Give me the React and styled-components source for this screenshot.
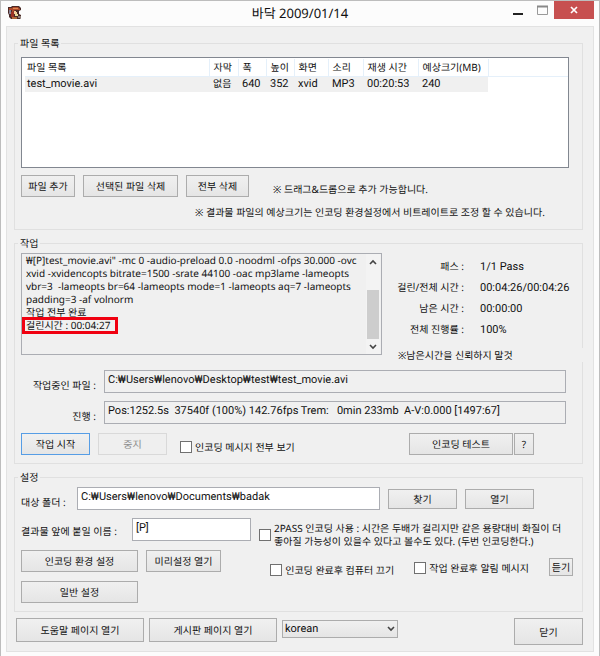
import React, { useState } from 'react';
import styled, { createGlobalStyle } from 'styled-components';

const valueFont = "11px/14px Roboto, 'Noto Sans', 'Noto Sans CJK KR', sans-serif";

const GlobalStyle = createGlobalStyle`
  * {
    box-sizing: border-box;
  }

  body {
    margin: 0;
    background: #fcfcfc;
    color: #111;
    font: 10px/14px 'Noto Sans', 'Noto Sans CJK KR', sans-serif;
    text-rendering: geometricPrecision;
  }

  button, input, select, textarea {
    margin: 0;
    color: inherit;
    font: inherit;
    text-rendering: inherit;
  }
`;

const Window = styled.div`
  min-height: 100vh;
  display: flex;
  flex-direction: column;
  padding: 0 5px 5px;
  border: 1px solid #bdbdbd;
  background: #fcfcfc;
`;

const TitleBar = styled.header`
  display: grid;
  grid-template-columns: 1fr auto 1fr;
  height: 25px;
`;

const AppIcon = styled.svg`
  width: 14px;
  height: 14px;
  margin: 5px 0 0 2px;
`;

const Title = styled.h1`
  margin: 0;
  font-size: 13px;
  font-weight: 400;
  line-height: 24px;
`;

const WindowButtons = styled.div`
  display: flex;
  justify-content: flex-end;
`;

const WindowButton = styled.button`
  width: ${(p) => (p.$close ? 40 : 24)}px;
  height: 18px;
  padding: 0;
  border: 0;
  background: ${(p) => (p.$close ? '#c75050' : 'transparent')};

  svg {
    display: block;
    margin: 0 auto;
  }
`;

const Client = styled.main`
  flex: 1;
  padding: 9px 10px 6px 7px;
  border: 1px solid #e2e2e2;
  background: #f0f0f0;
`;

const Group = styled.fieldset`
  min-width: 0;
  margin: 0 0 6px;
  padding: 0 9px 8px 6px;
  border: 1px solid #e0e0e0;
`;

const Legend = styled.legend`
  margin-left: -3px;
  padding: 0 2px;
`;

const Row = styled.div`
  display: flex;
  align-items: ${(p) => p.$align || 'center'};
  gap: 8px;
  margin-top: ${(p) => p.$top || 0}px;
  padding-right: ${(p) => p.$right || 0}px;
`;

const Button = styled.button`
  width: ${(p) => p.$width}px;
  height: ${(p) => p.$height || 22}px;
  flex: none;
  padding: 0;
  border: 1px solid ${(p) => (p.$primary ? '#569de5' : '#acacac')};
  background: linear-gradient(#f0f0f0, #e5e5e5);

  &:disabled {
    border-color: #d9d9d9;
    background: #efefef;
    color: #8c8c8c;
  }
`;

const ButtonPair = styled.div`
  display: flex;
  gap: 1px;
`;

const Field = styled.input`
  width: ${(p) => (p.$width ? `${p.$width}px` : 'auto')};
  height: 23px;
  min-width: 0;
  flex: ${(p) => (p.$width ? 'none' : 1)};
  padding: 0 3px 4px;
  border: 1px solid #abadb3;
  background: #fff;
  font: ${valueFont};

  &:read-only {
    background: #f0f0f0;
  }
`;

const FieldLabel = styled.label`
  width: ${(p) => p.$width}px;
  flex: none;
  padding-top: 6px;
  text-align: ${(p) => p.$textAlign || 'left'};
`;

const FileList = styled.div`
  height: 111px;
  margin: 7px 4px 0 0;
  padding: 1px 0 0 3px;
  border: 1px solid #828790;
  background: #fff;
`;

const FileTable = styled.table`
  width: 100%;
  border-collapse: collapse;
  table-layout: fixed;

  th, td {
    height: 16px;
    padding: 0 0 0 4px;
    text-align: left;
    font-weight: 400;
    line-height: 14px;
    white-space: nowrap;
  }

  th {
    height: 17px;
    border-right: 1px solid #e5f0fa;
    border-bottom: 1px solid #e5f0fa;
  }

  th:first-child, td:first-child {
    padding-left: 2px;
  }

  th:last-child {
    border-right: 0;
  }

  td {
    background: #f0f0f0;
    font: ${valueFont};
  }

  td:last-child {
    background: #fff;
  }
`;

const Small = styled.span`
  font-size: 10px;
`;

const Note = styled.p`
  margin: ${(p) => p.$margin || 0};
  background: #f0f0f0;
`;

const LogFrame = styled.div`
  position: relative;
  display: flex;
  width: 361px;
  height: 102px;
  flex: none;
  padding: 0 1px;
  border: 1px solid #abadb3;
`;

const LogText = styled.textarea`
  min-width: 0;
  flex: 1;
  padding: 0 0 0 3px;
  border: 0;
  outline: 0;
  resize: none;
  overflow: hidden;
  background: transparent;
  line-height: 13px;
  white-space: pre;
`;

const ScrollBar = styled.div`
  display: flex;
  flex-direction: column;
  justify-content: space-between;
  width: 14px;
  background: #f3f3f3;
`;

const ScrollButton = styled.button`
  height: 15px;
  padding: 0;
  border: 0;
  background: transparent;

  svg {
    display: block;
    margin: 0 auto;
  }
`;

const ScrollThumb = styled.div`
  height: 49px;
  margin: auto 1px 0;
  background: #cdcdcd;
`;

const Highlight = styled.div`
  position: absolute;
  left: 0;
  top: 63px;
  width: 96px;
  height: 17px;
  border: 3px solid #f00010;
`;

const Status = styled.dl`
  display: grid;
  grid-template-columns: 74px 1fr;
  column-gap: 16px;
  margin: 3px 0 0;
  line-height: 21px;

  dt {
    text-align: right;
    white-space: nowrap;
  }

  dd {
    margin: 0;
    font: ${valueFont};
    line-height: 21px;
  }
`;

const StatusColumn = styled.div`
  flex: 1;
  min-width: 0;
`;

const CheckLabel = styled.label`
  display: flex;
  align-items: center;
  gap: 3px;
  margin-top: ${(p) => p.$top || 0}px;
  margin-left: ${(p) => p.$left || 0}px;
  white-space: nowrap;

  input {
    width: 12px;
    height: 12px;
    flex: none;
    appearance: none;
    border: 1px solid #707070;
    background: #fff;
  }

  input:checked {
    box-shadow: inset 0 0 0 2px #fff;
    background: #333;
  }
`;

const TwoLines = styled.span`
  line-height: 13px;
`;

const Spacer = styled.div`
  flex: 1;
`;

const Options = styled.div`
  display: flex;
  align-items: flex-start;
  justify-content: space-between;
  margin-top: 2px;
`;

const OptionButtons = styled.div`
  display: grid;
  grid-template-columns: auto auto;
  gap: 9px 8px;
`;

const OptionChecks = styled.div`
  display: flex;
  gap: 20px;
  padding-top: 8px;
`;

const Footer = styled.footer`
  display: flex;
  align-items: flex-start;
  gap: 5px;
  padding-left: 2px;
`;

const SelectBox = styled.div`
  position: relative;
  width: 116px;
  margin-top: 2px;

  svg {
    position: absolute;
    right: 3px;
    top: 6px;
    pointer-events: none;
  }
`;

const Select = styled.select`
  display: block;
  width: 100%;
  height: 18px;
  padding: 0 2px;
  appearance: none;
  border: 1px solid #acacac;
  border-radius: 0;
  background: linear-gradient(#f0f0f0, #e5e5e5);
  font: ${valueFont};
`;

const columns = [
  ['파일 목록', 184],
  ['자막', 29],
  ['폭', 28],
  ['높이', 28],
  ['화면', 34],
  ['소리', 35],
  ['재생 시간', 55],
];

const log = [
  '₩[P]test_movie.avi" -mc 0 -audio-preload 0.0 -noodml -ofps 30.000 -ovc',
  'xvid -xvidencopts bitrate=1500 -srate 44100 -oac mp3lame -lameopts',
  'vbr=3  -lameopts br=64 -lameopts mode=1 -lameopts aq=7 -lameopts',
  'padding=3 -af volnorm',
  '작업 전부 완료',
  '걸린시간 : 00:04:27',
].join('\n');

const Chevron = ({ up }) => (
  <svg width="8" height="6" viewBox="0 0 8 6" aria-hidden="true">
    <path d={up ? 'M1 5 4 2 7 5' : 'M1 1 4 4 7 1'} fill="none" stroke="#444" strokeWidth="1.6" />
  </svg>
);

const Check = ({ label, top, left }) => {
  const [checked, setChecked] = useState(false);
  return (
    <CheckLabel $top={top} $left={left}>
      <input type="checkbox" checked={checked} onChange={(e) => setChecked(e.target.checked)} />
      {label}
    </CheckLabel>
  );
};

const App = () => {
  const [folder, setFolder] = useState('C:₩Users₩lenovo₩Documents₩badak');
  const [prefix, setPrefix] = useState('[P]');
  const [language, setLanguage] = useState('korean');

  return (
    <Window>
      <GlobalStyle />
      <TitleBar>
        <AppIcon viewBox="0 0 14 14" aria-hidden="true">
          <path d="M0 1h3l1-1h7l2 2v2l-2 1v3l2 1v3l-1 1H3l-2-2V9L0 7z" fill="#4a2a26" />
          <path d="M1 2h3l1-1h5l2 2v1H7L5 6H4V4H1z" fill="#b04a2c" />
          <path d="M5 2h5v1H5z" fill="#e08a50" />
          <path d="M1 4h2v4H1z" fill="#8a8496" />
          <path d="M3 6h3v5H3z" fill="#9c3222" />
          <path d="M6 5h3v3H6z" fill="#f2cf9a" />
          <path d="M8 5h1v1H8z" fill="#3a2420" />
          <path d="M7 8h3v2H7z" fill="#e6dc9c" />
          <path d="M10 10h3v2h-3z" fill="#8f8078" />
          <path d="M4 11h5v2H4z" fill="#b06a38" />
        </AppIcon>
        <Title>바닥 2009/01/14</Title>
        <WindowButtons>
          <WindowButton aria-label="최소화">
            <svg width="10" height="14" viewBox="0 0 10 14">
              <path d="M0 11h10" stroke="#222" strokeWidth="2" />
            </svg>
          </WindowButton>
          <WindowButton aria-label="최대화">
            <svg width="11" height="10" viewBox="0 0 11 10">
              <path d="M.5 1.5h10v8H.5z" fill="none" stroke="#999" />
              <path d="M0 1.5h11" stroke="#888" strokeWidth="2" />
            </svg>
          </WindowButton>
          <WindowButton $close aria-label="창 닫기">
            <svg width="8" height="8" viewBox="0 0 8 8">
              <path d="M1 1l6 6M7 1 1 7" stroke="#fff" strokeWidth="1.7" />
            </svg>
          </WindowButton>
        </WindowButtons>
      </TitleBar>

      <Client>
        <Group>
          <Legend>파일 목록</Legend>
          <FileList>
            <FileTable>
              <colgroup>
                {columns.map(([name, width]) => (
                  <col key={name} width={width} />
                ))}
                <col width="70" />
                <col />
              </colgroup>
              <thead>
                <tr>
                  {columns.map(([name]) => (
                    <th key={name}>{name}</th>
                  ))}
                  <th>예상크기(MB)</th>
                  <th />
                </tr>
              </thead>
              <tbody>
                <tr>
                  <td>test_movie.avi</td>
                  <td><Small>없음</Small></td>
                  <td>640</td>
                  <td>352</td>
                  <td>xvid</td>
                  <td>MP3</td>
                  <td>00:20:53</td>
                  <td>240</td>
                  <td />
                </tr>
              </tbody>
            </FileTable>
          </FileList>
          <Row $top={7}>
            <Button $width={54}>파일 추가</Button>
            <Button $width={95}>선택된 파일 삭제</Button>
            <Button $width={63}>전부 삭제</Button>
            <Note $margin="5px 0 0 16px">※ 드래그&amp;드롭으로 추가 가능합니다.</Note>
          </Row>
          <Note $margin="8px 0 2px 174px">
            ※ 결과물 파일의 예상크기는 인코딩 환경설정에서 비트레이트로 조정 할 수 있습니다.
          </Note>
        </Group>

        <Group>
          <Legend>작업</Legend>
          <Row $align="flex-start" $top={3}>
            <LogFrame>
              <LogText aria-label="작업" readOnly value={log} />
              <ScrollBar>
                <ScrollButton aria-label="위로"><Chevron up /></ScrollButton>
                <ScrollThumb />
                <ScrollButton aria-label="아래로"><Chevron /></ScrollButton>
              </ScrollBar>
              <Highlight />
            </LogFrame>
            <StatusColumn>
              <Status>
                <dt>패스 :</dt>
                <dd>1/1 Pass</dd>
                <dt>걸린/전체 시간 :</dt>
                <dd>00:04:26/00:04:26</dd>
                <dt>남은 시간 :</dt>
                <dd>00:00:00</dd>
                <dt>전체 진행률 :</dt>
                <dd>100%</dd>
              </Status>
              <Note $margin="8px -10px 0 8px">※남은시간을 신뢰하지 말것</Note>
            </StatusColumn>
          </Row>
          <Row $top={8} $right={7}>
            <FieldLabel htmlFor="current" $width={75} $textAlign="right">작업중인 파일 :</FieldLabel>
            <Field id="current" readOnly value="C:₩Users₩lenovo₩Desktop₩test₩test_movie.avi" />
          </Row>
          <Row $top={8} $right={7}>
            <FieldLabel htmlFor="progress" $width={75} $textAlign="right">진행 :</FieldLabel>
            <Field
              id="progress"
              readOnly
              value="Pos:1252.5s  37540f (100%) 142.76fps Trem:   0min 233mb  A-V:0.000 [1497:67]"
            />
          </Row>
          <Row $top={9} $right={39}>
            <Button $width={69} $primary>작업 시작</Button>
            <Button $width={69} disabled>중지</Button>
            <Check left={5} top={5} label="인코딩 메시지 전부 보기" />
            <Spacer />
            <ButtonPair>
              <Button $width={104}>인코딩 테스트</Button>
              <Button $width={20}>?</Button>
            </ButtonPair>
          </Row>
        </Group>

        <Group>
          <Legend>설정</Legend>
          <Row $top={3} $right={39}>
            <FieldLabel htmlFor="folder" $width={48}>대상 폴더 :</FieldLabel>
            <Field id="folder" value={folder} onChange={(e) => setFolder(e.target.value)} />
            <Button $width={69} $height={20}>찾기</Button>
            <Button $width={69} $height={20}>열기</Button>
          </Row>
          <Row $align="flex-start" $top={8}>
            <FieldLabel htmlFor="prefix" $width={103}>결과물 앞에 붙일 이름 :</FieldLabel>
            <Field
              id="prefix"
              $width={119}
              value={prefix}
              onChange={(e) => setPrefix(e.target.value)}
            />
            <Check
              top={4}
              label={
                <TwoLines>
                  2PASS 인코딩 사용 : 시간은 두배가 걸리지만 같은 용량대비 화질이 더
                  <br />
                  좋아질 가능성이 있을수 있다고 볼수도 있다. (두번 인코딩한다.)
                </TwoLines>
              }
            />
          </Row>
          <Options>
            <OptionButtons>
              <Button $width={117}>인코딩 환경 설정</Button>
              <Button $width={75}>미리설정 열기</Button>
              <Button $width={117}>일반 설정</Button>
            </OptionButtons>
            <OptionChecks>
              <Check top={5} label="인코딩 완료후 컴퓨터 끄기" />
              <Check label="작업 완료후 알림 메시지" />
              <Button $width={24} $height={18}>듣기</Button>
            </OptionChecks>
          </Options>
        </Group>

        <Footer>
          <Button $width={128} $height={24}>도움말 페이지 열기</Button>
          <Button $width={128} $height={24}>게시판 페이지 열기</Button>
          <SelectBox>
            <Select
              aria-label="language"
              value={language}
              onChange={(e) => setLanguage(e.target.value)}
            >
              <option value="korean">korean</option>
              <option value="english">english</option>
            </Select>
            <Chevron />
          </SelectBox>
          <Spacer />
          <Button $width={69} $height={27}>닫기</Button>
        </Footer>
      </Client>
    </Window>
  );
};

export default App;
